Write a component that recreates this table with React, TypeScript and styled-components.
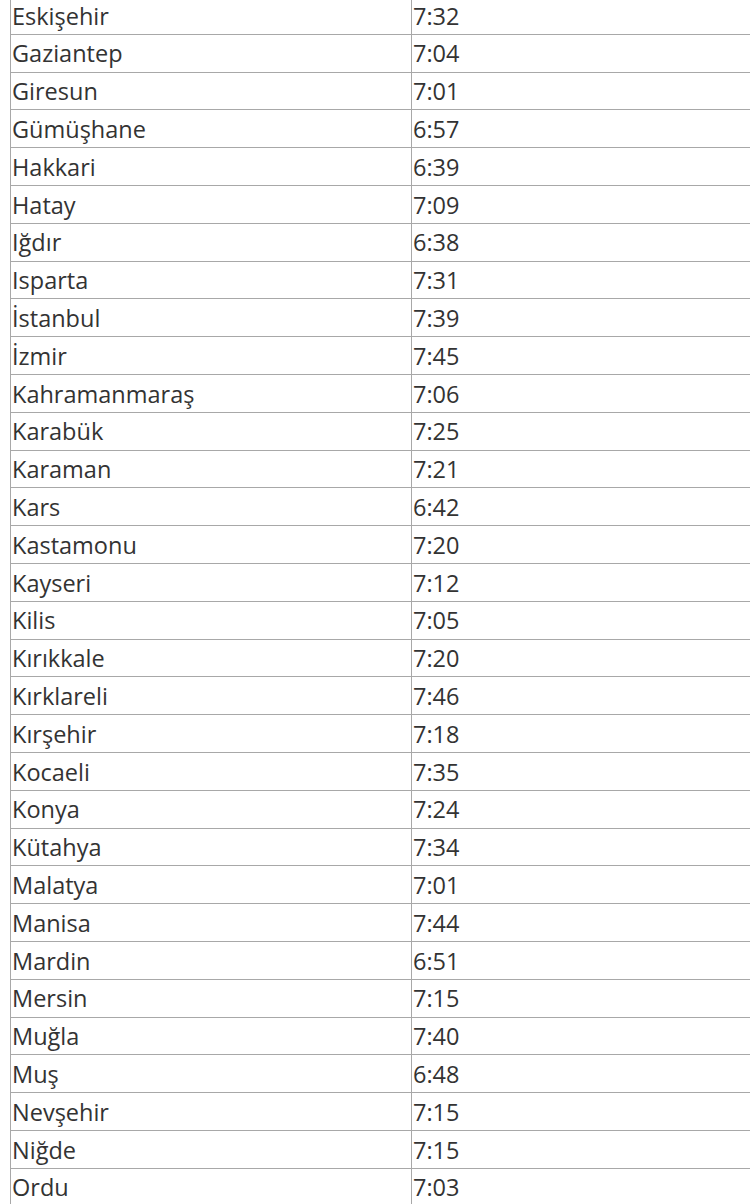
import React from 'react';
import styled, { createGlobalStyle } from 'styled-components';

const GlobalStyle = createGlobalStyle`
  html, body {
    margin: 0;
    padding: 0;
    background: #fff;
    overflow: hidden;
  }
`;

const rows: [string, string][] = [
  ['Eskişehir', '7:32'],
  ['Gaziantep', '7:04'],
  ['Giresun', '7:01'],
  ['Gümüşhane', '6:57'],
  ['Hakkari', '6:39'],
  ['Hatay', '7:09'],
  ['Iğdır', '6:38'],
  ['Isparta', '7:31'],
  ['İstanbul', '7:39'],
  ['İzmir', '7:45'],
  ['Kahramanmaraş', '7:06'],
  ['Karabük', '7:25'],
  ['Karaman', '7:21'],
  ['Kars', '6:42'],
  ['Kastamonu', '7:20'],
  ['Kayseri', '7:12'],
  ['Kilis', '7:05'],
  ['Kırıkkale', '7:20'],
  ['Kırklareli', '7:46'],
  ['Kırşehir', '7:18'],
  ['Kocaeli', '7:35'],
  ['Konya', '7:24'],
  ['Kütahya', '7:34'],
  ['Malatya', '7:01'],
  ['Manisa', '7:44'],
  ['Mardin', '6:51'],
  ['Mersin', '7:15'],
  ['Muğla', '7:40'],
  ['Muş', '6:48'],
  ['Nevşehir', '7:15'],
  ['Niğde', '7:15'],
  ['Ordu', '7:03'],
];

const Page = styled.div`
  width: 750px;
  height: 1204px;
  overflow: hidden;
`;

const TimeTable = styled.div`
  margin: -3px 0 0 10px;
  border-left: 1px solid #a8a8a8;
  font-family: 'Open Sans', 'Noto Sans', sans-serif;
  font-size: 23.5px;
  color: #333;
`;

const Row = styled.div`
  display: grid;
  grid-template-columns: 401px 1fr;
  height: 37.8px;
  box-sizing: border-box;
  border-bottom: 1px solid #a8a8a8;
`;

const Cell = styled.div<{ $divider?: boolean }>`
  display: flex;
  align-items: center;
  padding: 2px 0 0 1px;
  border-right: ${props => (props.$divider ? '1px solid #a8a8a8' : 'none')};
  line-height: 1;
  white-space: nowrap;
`;

const App: React.FC = () => {
  return (
    <Page>
      <GlobalStyle />
      <TimeTable>
        {rows.map(([city, time]) => (
          <Row key={city}>
            <Cell $divider>{city}</Cell>
            <Cell>{time}</Cell>
          </Row>
        ))}
      </TimeTable>
    </Page>
  );
};

export default App;
